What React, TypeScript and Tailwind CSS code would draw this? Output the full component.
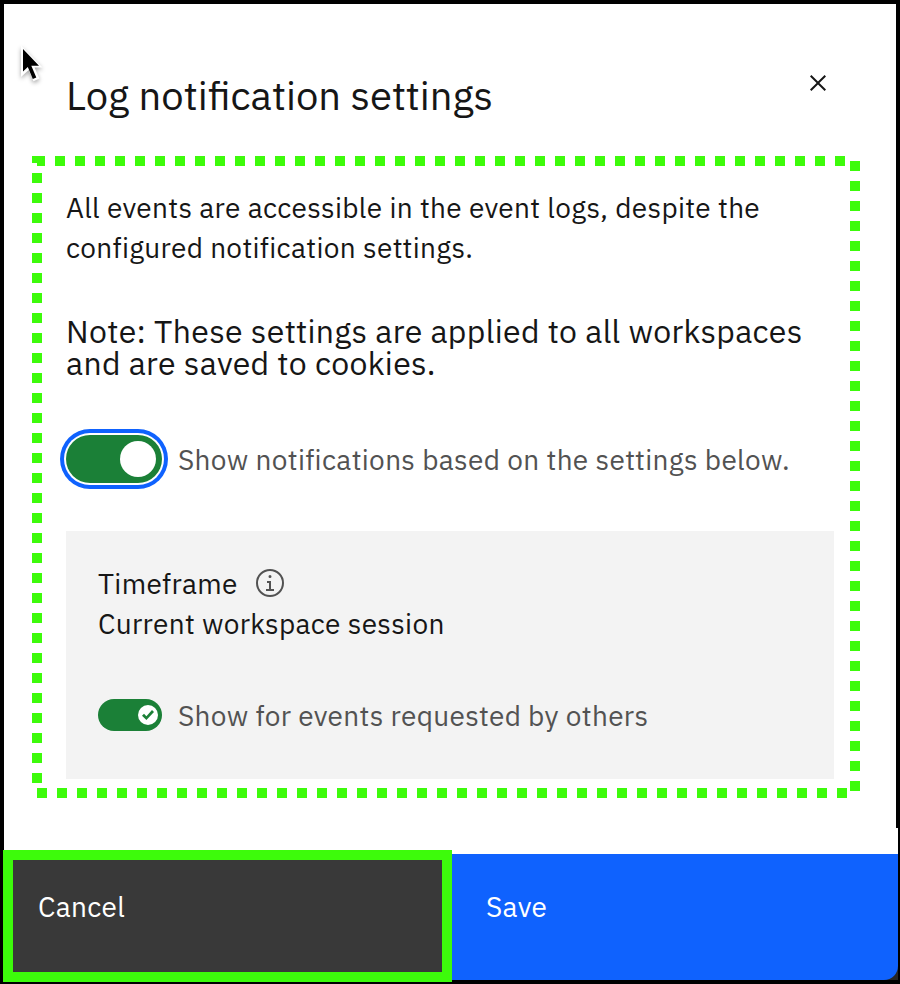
function Line({ children, className = '' }: { children: string; className?: string }) {
  return <div className={`whitespace-nowrap ${className}`}>{children}</div>;
}

function CloseIcon() {
  return (
    <svg width="32" height="32" viewBox="0 0 32 32" fill="#161616">
      <path d="M24 9.4 22.6 8 16 14.6 9.4 8 8 9.4l6.6 6.6L8 22.6 9.4 24l6.6-6.6 6.6 6.6 1.4-1.4-6.6-6.6L24 9.4z" />
    </svg>
  );
}

function InfoIcon() {
  return (
    <svg width="32" height="32" viewBox="0 0 32 32" fill="#525252">
      <path d="M17 22v-8h-4v2h2v6h-3v2h8v-2h-3zM16 8a1.5 1.5 0 1 0 1.5 1.5A1.5 1.5 0 0 0 16 8z" />
      <path d="M16 30a14 14 0 1 1 14-14 14 14 0 0 1-14 14zm0-26a12 12 0 1 0 12 12A12 12 0 0 0 16 4z" />
    </svg>
  );
}

function Pointer() {
  return (
    <svg className="absolute left-[16px] top-[42px] drop-shadow-[0_2px_2px_rgba(0,0,0,0.35)]" width="32" height="44" viewBox="0 0 32 44">
      <path d="M5 3.500 26.500 25.500h-8l5 11-6 2.800-4.800-11.300L5 35z" fill="#fff" />
      <path d="M7 7v22.500l4.800-4.500 5 12 3.500-1.600-5-11.600H23z" fill="#000" />
    </svg>
  );
}

function DottedFrame() {
  return (
    <svg className="pointer-events-none absolute left-0 top-0" width="900" height="984" stroke="#3dfb0b" strokeWidth="10" strokeDasharray="10 10" shapeRendering="crispEdges">
      <line x1="37" y1="161" x2="850" y2="161" strokeDashoffset="2" />
      <line x1="37" y1="156" x2="37" y2="788" strokeDashoffset="3" />
      <line x1="855" y1="161" x2="855" y2="792" />
      <line x1="37" y1="793" x2="850" y2="793" />
    </svg>
  );
}

export default function App() {
  return (
    <div className="relative flex h-[984px] w-[900px] flex-col bg-black pt-1 pl-1 font-['IBM_Plex_Sans','Open_Sans',sans-serif] text-[#161616]">
      <main className="h-[824px] w-[892px] bg-white px-[62px] pt-[66px]">
        <header className="flex h-[118px] justify-between">
          <Line className="mt-px text-[40px] leading-[48px]">Log notification settings</Line>
          <button className="-mt-[3px] h-8 w-8"><CloseIcon /></button>
        </header>
        <div className="h-[127px] text-[28px] leading-[40px] tracking-[0.33px]">
          <Line>All events are accessible in the event logs, despite the</Line>
          <Line>configured notification settings.</Line>
        </div>
        <div className="h-[120px] text-[32px] leading-[32px] tracking-[0.33px]">
          <Line>Note: These settings are applied to all workspaces</Line>
          <Line>and are saved to cookies.</Line>
        </div>
        <div className="flex h-[96px]">
          <div className="flex h-12 w-24 items-center justify-end rounded-full bg-[#1b8037] pr-[6px] ring-[4px] ring-[#0f62fe] ring-offset-2 ring-offset-white">
            <div className="h-9 w-9 rounded-full bg-white" />
          </div>
          <Line className="ml-4 mt-[5px] text-[28px] leading-[40px] tracking-[0.33px] text-[#525252]">Show notifications based on the settings below.</Line>
        </div>
        <section className="h-[248px] w-[768px] bg-[#f3f3f3] pl-8 pt-[33px] text-[28px] leading-[40px] tracking-[0.32px]">
          <div className="flex h-[40px]">
            <Line className="w-[156px]">Timeframe</Line>
            <div className="mt-[3px]"><InfoIcon /></div>
          </div>
          <Line>Current workspace session</Line>
          <div className="mt-[52px] flex">
            <div className="mt-[3px] flex h-8 w-16 items-center justify-end rounded-full bg-[#1b8037] pr-1">
              <div className="flex h-5 w-5 items-center justify-center rounded-full bg-white">
                <svg width="12" height="10" viewBox="0 0 12 10" fill="#1b8037">
                  <path d="M4.400 10 0 5.800 2 3.800l2.400 2.400L10 0l2 2z" />
                </svg>
              </div>
            </div>
            <Line className="ml-4 text-[#525252]">Show for events requested by others</Line>
          </div>
        </section>
      </main>
      <div className="h-[26px] w-[894px] bg-white" />
      <footer className="-ml-px -mt-[4px] flex h-[132px] text-[28px] leading-[40px] tracking-[0.32px] text-white">
        <button className="flex w-[449px] items-start border-[10px] border-[#3dfb0b] bg-[#393939] pl-[25px] pt-[27px] text-left">
          <Line>Cancel</Line>
        </button>
        <div className="mt-[4px] h-[126px] w-[446px] bg-[#262626]">
          <button className="flex h-full w-full items-start rounded-br-[14px] bg-[#0f62fe] pl-[34px] pt-[33px] text-left">
            <Line>Save</Line>
          </button>
        </div>
      </footer>
      <DottedFrame />
      <Pointer />
    </div>
  );
}
